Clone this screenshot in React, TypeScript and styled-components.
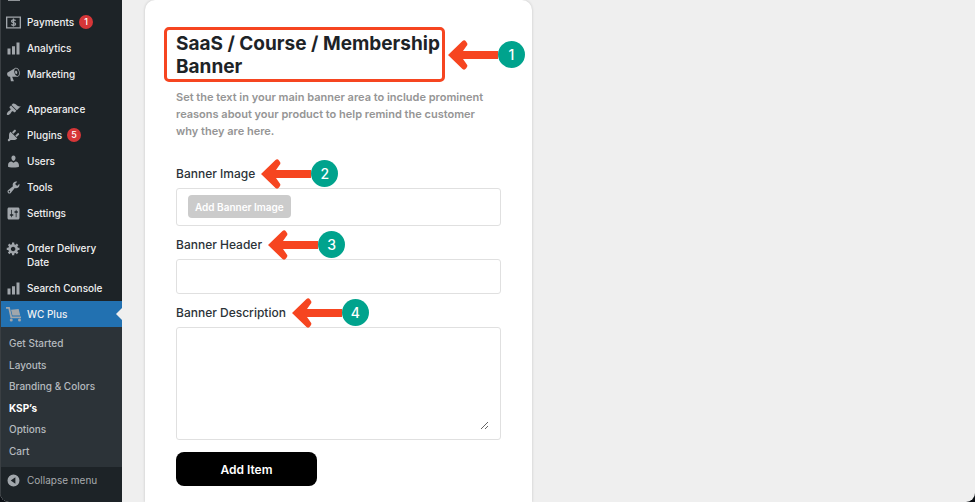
import React, { ReactNode } from "react";
import styled, { createGlobalStyle, css } from "styled-components";

const GlobalStyle = createGlobalStyle`
  *, *::before, *::after { box-sizing: border-box; }
  body {
    margin: 0;
    background: #0b0f14;
    font-family: Inter, "Liberation Sans", sans-serif;
    font-size: 11px;
    color: #1d2327;
  }
  button, input, textarea { font: inherit; }
  h1, p, ul { margin: 0; padding: 0; }
`;

const Shell = styled.div`
  display: flex;
  height: 100vh;
  overflow: hidden;
  border-radius: 0 0 9px 9px;
  background: #efefef;
`;

const Sidebar = styled.nav`
  flex: 0 0 122px;
  display: flex;
  flex-direction: column;
  background: #1d2327;
  border-left: 1px solid #3a3f43;
  font-size: 10px;
`;

const MenuList = styled.ul`
  list-style: none;
`;

const ScrolledItem = styled.div`
  height: 9px;
  padding-left: 7px;
  svg { display: block; }
`;

const Separator = styled.li`
  height: 9px;
`;

const MenuLink = styled.a<{ $current?: boolean }>`
  position: relative;
  display: grid;
  grid-template-columns: 15px 1fr;
  column-gap: 6px;
  padding: 6px 8px 6px 5px;
  line-height: 14px;
  font-weight: 500;
  color: #f0f0f1;
  text-decoration: none;
  ${(p) =>
    p.$current &&
    css`
      background: #2271b1;
      &::after {
        content: "";
        position: absolute;
        right: 0;
        top: 7px;
        border: 6px solid transparent;
        border-left-width: 0;
        border-right-color: #efefef;
      }
    `}
`;

const Glyph = styled.svg`
  width: 15px;
  height: 15px;
  margin-bottom: -1px;
  fill: #a1a6ab;
`;

const Count = styled.span`
  display: inline-block;
  min-width: 14px;
  height: 14px;
  margin-left: 5px;
  border-radius: 7px;
  background: #d63638;
  color: #fff;
  font-size: 9px;
  text-align: center;
  vertical-align: top;
`;

const SubMenu = styled.ul`
  display: grid;
  grid-auto-rows: 1fr;
  height: 140px;
  padding: 6px 0 5px;
  list-style: none;
  background: #2c3338;
`;

const SubLink = styled.a<{ $current?: boolean }>`
  display: block;
  padding-left: 8px;
  line-height: 21px;
  font-weight: ${(p) => (p.$current ? 700 : 500)};
  color: ${(p) => (p.$current ? "#fff" : "#b5babf")};
  text-decoration: none;
`;

const CollapseButton = styled.button`
  display: grid;
  grid-template-columns: 15px 1fr;
  column-gap: 6px;
  padding: 6px 8px 6px 5px;
  border: 0;
  background: none;
  line-height: 14px;
  text-align: left;
  color: #a7aaad;
`;

const Main = styled.main`
  flex: 1;
  padding-left: 23px;
`;

const Card = styled.form`
  display: flex;
  flex-direction: column;
  align-items: stretch;
  max-width: 387px;
  min-height: 100%;
  padding: 27px 31px 16px;
  background: #fff;
  border-radius: 10px 10px 0 0;
  box-shadow: 0 0 3px rgba(0, 0, 0, 0.18);
`;

const TitleBox = styled.div`
  position: relative;
  width: 281px;
  margin-left: -12px;
  padding: 2px 0 1px 9px;
  border: 3px solid #f64520;
  border-radius: 5px;
`;

const Title = styled.h1`
  font-size: 19px;
  line-height: 23px;
  font-weight: 700;
  white-space: nowrap;
`;

const Intro = styled.p`
  margin: 7px 0 15px;
  padding-right: 14px;
  line-height: 17px;
  font-weight: 600;
  color: #959595;
`;

const Label = styled.label`
  position: relative;
  align-self: flex-start;
  margin: 10px 0 6px;
  line-height: 17px;
  font-size: 12px;
  font-weight: 500;
  color: #2c3338;
`;

const fieldFrame = css`
  width: 100%;
  border: 1px solid #e0e0e0;
  border-radius: 3px;
  background: #fff;
`;

const UploadField = styled.div`
  ${fieldFrame}
  padding: 6px 11px 7px;
`;

const UploadButton = styled.button`
  display: block;
  height: 23px;
  padding: 0 7px;
  border: 0;
  border-radius: 4px;
  background: #cbcbcb;
  color: #fff;
  font-size: 10px;
  font-weight: 600;
  white-space: nowrap;
`;

const TextInput = styled.input`
  ${fieldFrame}
  height: 35px;
  padding: 0 11px;
`;

const TextAreaFrame = styled.div`
  ${fieldFrame}
  padding: 9px 11px;
`;

const TextArea = styled.textarea`
  display: block;
  width: 100%;
  height: 93px;
  padding: 0;
  border: 0;
  outline: 0;
  resize: vertical;
  background: transparent;
`;

const SubmitButton = styled.button`
  width: 141px;
  height: 34px;
  margin-top: 12px;
  border: 0;
  border-radius: 8px;
  background: #000;
  color: #fff;
  font-size: 12px;
  font-weight: 600;
`;

const Pointer = styled.span`
  position: absolute;
  z-index: 1;
  left: calc(100% + 6px);
  top: 50%;
  display: flex;
  align-items: center;
  transform: translateY(-50%);
`;

const PointerNumber = styled.span`
  width: 27px;
  height: 27px;
  border-radius: 50%;
  background: #00a38d;
  color: #fff;
  font-size: 14px;
  font-weight: 500;
  line-height: 27px;
  text-align: center;
`;

function Callout({ n }: { n: number }) {
  return (
    <Pointer>
      <svg width="50" height="30" viewBox="0 0 50 30" fill="#f64520" aria-hidden="true">
        <path d="M0 15 14.5 1Q16.5-.5 18 1.5L19 3Q20 4.500 18.500 6L15 11H50V19H15L18.500 24Q20 25.500 19 27L18 28.500Q16.500 30.500 14.500 29Z" />
      </svg>
      <PointerNumber>{n}</PointerNumber>
    </Pointer>
  );
}

const icons: Record<string, ReactNode> = {
  payments: (
    <>
      <path fillRule="evenodd" d="M0 2h20v16H0zM1.800 3.800v12.400h16.400V3.800z" />
      <path
        d="M12.800 7.600c-.5-.8-1.500-1.200-2.700-1.200-1.600 0-2.700.7-2.700 1.800 0 2.500 5.400 1.200 5.400 3.700 0 1.100-1.100 1.800-2.700 1.800-1.300 0-2.300-.4-2.900-1.300M10 4.800v10.400"
        fill="none"
        stroke="#a1a6ab"
        strokeWidth="1.700"
      />
    </>
  ),
  chart: <path d="M18 18V2h-4v16h4zm-6 0V7H8v11h4zm-6 0v-8H2v8h4z" />,
  megaphone: (
    <path d="M18.15 5.94c.46 1.62.38 3.22-.02 4.48-.42 1.28-1.26 2.18-2.3 2.48-.16.06-.26.06-.4.06-.06.02-.12.02-.18.02-.06.02-.14.02-.22.02h-6.8l2.220 5.5c.02.14-.06.26-.14.34-.08.1-.24.16-.34.16H6.950c-.1 0-.26-.06-.34-.16-.08-.08-.16-.2-.14-.34l-1-5.5H4.250l-.02-.02c-.5.06-1.080-.18-1.540-.62s-.88-1.080-1.060-1.880c-.24-.8-.2-1.560-.02-2.200.18-.62.58-1.080 1.060-1.300l.02-.02 9-5.400c.1-.06.18-.1.24-.16.06-.04.14-.08.24-.12.16-.08.28-.12.5-.18 1.040-.3 2.240.1 3.220.98s1.840 2.240 2.260 3.860zm-2.580 5.980h-.02c.4-.1.74-.34 1.040-.7.58-.7.86-1.760.86-3.040 0-.64-.1-1.300-.28-1.980-.34-1.360-1.020-2.500-1.780-3.240s-1.680-1.100-2.460-.88c-.82.22-1.400.96-1.700 2-.32 1.040-.28 2.360.06 3.720.38 1.360 1 2.500 1.800 3.240.78.74 1.620 1.100 2.480.88zm-2.540-7.080c.22-.04.42-.02.62.04.38.16.76.48 1.020 1s.42 1.200.42 1.780c0 .3-.04.56-.12.8-.18.48-.44.84-.86.94-.34.1-.8-.06-1.140-.4s-.64-.86-.78-1.500c-.18-.62-.12-1.240.02-1.720s.48-.84.82-.94z" />
  ),
  brush: (
    <path d="M14.48 11.06L7.410 3.990l1.500-1.500c.5-.56 2.300-.47 3.510.32 1.210.8 1.430 1.280 2.910 2.100 1.180.64 2.450 1.260 4.450.85zm-.71.71L6.700 4.700 4.930 6.470c-.39.39-.39 1.020 0 1.410l1.060 1.060c.39.39.39 1.030 0 1.420-.6.6-1.430 1.110-2.210 1.690-.35.26-.7.53-1.010.84C1.430 14.230.4 16.080 1.400 17.070c.99 1 2.840-.03 4.180-1.360.31-.31.58-.66.85-1.020.57-.78 1.080-1.610 1.690-2.210.39-.39 1.020-.39 1.410 0l1.060 1.060c.39.39 1.020.39 1.410 0z" />
  ),
  plug: (
    <path d="M13.11 4.36L9.870 7.600 8 5.730l3.240-3.240c.35-.34 1.050-.2 1.560.32.52.51.66 1.210.31 1.550zm-8 1.770l.91-1.120 9.010 9.010-1.190.84c-.71.71-2.630 1.160-3.820 1.160H6.140L4.900 17.260c-.59.59-1.540.59-2.120 0-.59-.58-.59-1.530 0-2.120l1.240-1.240v-3.880c0-1.130.4-3.190 1.090-3.890zm7.260 3.970l3.240-3.240c.34-.35 1.040-.21 1.550.31.52.51.66 1.210.31 1.550l-3.240 3.250z" />
  ),
  user: (
    <path d="M10 9.250c-2.270 0-2.730-3.440-2.730-3.440C7 4.020 7.820 2 9.970 2c2.160 0 2.980 2.020 2.710 3.810 0 0-.41 3.440-2.680 3.440zm0 2.570L12.720 10c2.390 0 4.520 2.330 4.520 4.530v2.490s-3.650 1.130-7.240 1.130c-3.650 0-7.240-1.130-7.240-1.130v-2.490c0-2.250 1.940-4.480 4.470-4.480z" />
  ),
  wrench: (
    <path d="M16.680 9.770c-1.340 1.340-3.300 1.670-4.950.99l-5.410 6.520c-.99.99-2.590.99-3.580 0s-.99-2.590 0-3.570l6.520-5.420c-.68-1.650-.35-3.610.99-4.950 1.280-1.280 3.120-1.620 4.720-1.060l-2.890 2.890 2.820 2.820 2.860-2.870c.53 1.580.18 3.390-1.080 4.650zM3.810 16.210c.4.39 1.040.39 1.430 0 .4-.4.4-1.040 0-1.430-.39-.4-1.030-.4-1.430 0-.39.39-.39 1.030 0 1.430z" />
  ),
  sliders: (
    <path d="M18 16V4c0-1.100-.9-2-2-2H4c-1.100 0-2 .9-2 2v12c0 1.100.9 2 2 2h12c1.100 0 2-.9 2-2zM8 11h1c.55 0 1 .45 1 1s-.45 1-1 1H8v1.500c0 .28-.22.5-.5.5s-.5-.22-.5-.5V13H6c-.55 0-1-.45-1-1s.45-1 1-1h1V5.500c0-.28.22-.5.5-.5s.5.22.5.5V11zm5-2h-1c-.55 0-1-.45-1-1s.45-1 1-1h1V5.500c0-.28.22-.5.5-.5s.5.22.5.5V7h1c.55 0 1 .45 1 1s-.45 1-1 1h-1v5.500c0 .28-.22.5-.5.5s-.5-.22-.5-.5V9z" />
  ),
  gear: (
    <path d="M18 12h-2.180c-.17.7-.44 1.350-.81 1.930l1.540 1.540-2.100 2.100-1.540-1.540c-.58.36-1.230.63-1.910.79V19H8v-2.180c-.68-.16-1.330-.43-1.910-.79l-1.540 1.540-2.120-2.120 1.540-1.540c-.36-.58-.63-1.230-.79-1.910H1V9.030h2.170c.16-.7.44-1.350.8-1.940L2.430 5.550l2.100-2.100 1.540 1.540c.58-.37 1.240-.64 1.930-.81V2h3v2.180c.68.16 1.330.43 1.910.79l1.540-1.540 2.120 2.120-1.540 1.540c.36.59.64 1.240.8 1.940H18V12zm-8.500 1.500c1.660 0 3-1.340 3-3s-1.340-3-3-3-3 1.340-3 3 1.340 3 3 3z" />
  ),
  cart: (
    <>
      <path d="M0 0h5l3 12.500H20V15H6L3.200 2.400H0z" />
      <path d="M6.800 3.800 16.800 2.500l2.200 8.800H8.600z" />
      <circle cx="7" cy="17.400" r="2" />
      <circle cx="18" cy="17.400" r="2" />
    </>
  ),
  collapse: (
    <path fillRule="evenodd" d="M10 2a8 8 0 1 1 0 16 8 8 0 0 1 0-16zm2.500 3.800L6.300 10l6.200 4.200z" />
  ),
};

function Icon({ name }: { name: string }) {
  return (
    <Glyph viewBox="0 0 20 20" aria-hidden="true">
      {icons[name]}
    </Glyph>
  );
}

type Item = { icon: string; text: string; count?: number; current?: boolean };

const groups: Item[][] = [
  [
    { icon: "payments", text: "Payments", count: 1 },
    { icon: "chart", text: "Analytics" },
    { icon: "megaphone", text: "Marketing" },
  ],
  [
    { icon: "brush", text: "Appearance" },
    { icon: "plug", text: "Plugins", count: 5 },
    { icon: "user", text: "Users" },
    { icon: "wrench", text: "Tools" },
    { icon: "sliders", text: "Settings" },
  ],
  [
    { icon: "gear", text: "Order Delivery Date" },
    { icon: "chart", text: "Search Console" },
    { icon: "cart", text: "WC Plus", current: true },
  ],
];

const subItems = ["Get Started", "Layouts", "Branding & Colors", "KSP’s", "Options", "Cart"];

export default function App() {
  return (
    <>
      <GlobalStyle />
      <Shell>
        <Sidebar aria-label="Main menu">
          <ScrolledItem>
            <svg width="12" height="1" aria-hidden="true">
              <rect width="12" height="1" fill="#8f9498" />
            </svg>
          </ScrolledItem>
          <MenuList>
            {groups.map((group, i) => (
              <React.Fragment key={i}>
                {i > 0 && <Separator role="separator" />}
                {group.map((item) => (
                  <li key={item.text}>
                    <MenuLink href="#" $current={item.current}>
                      <Icon name={item.icon} />
                      <span>
                        {item.text}
                        {item.count && <Count>{item.count}</Count>}
                      </span>
                    </MenuLink>
                  </li>
                ))}
              </React.Fragment>
            ))}
          </MenuList>
          <SubMenu>
            {subItems.map((text) => (
              <li key={text}>
                <SubLink href="#" $current={text === "KSP’s"}>
                  {text}
                </SubLink>
              </li>
            ))}
          </SubMenu>
          <CollapseButton type="button">
            <Icon name="collapse" />
            Collapse menu
          </CollapseButton>
        </Sidebar>
        <Main>
          <Card onSubmit={(e) => e.preventDefault()}>
            <TitleBox>
              <Title>
                SaaS / Course / Membership
                <br />
                Banner
              </Title>
              <Callout n={1} />
            </TitleBox>
            <Intro>
              Set the text in your main banner area to include prominent reasons about your product
              to help remind the customer why they are here.
            </Intro>
            <Label as="div" id="image-label">
              Banner Image
              <Callout n={2} />
            </Label>
            <UploadField role="group" aria-labelledby="image-label">
              <UploadButton type="button">Add Banner Image</UploadButton>
            </UploadField>
            <Label htmlFor="banner-header">
              Banner Header
              <Callout n={3} />
            </Label>
            <TextInput id="banner-header" type="text" />
            <Label htmlFor="banner-description">
              Banner Description
              <Callout n={4} />
            </Label>
            <TextAreaFrame>
              <TextArea id="banner-description" />
            </TextAreaFrame>
            <SubmitButton type="submit">Add Item</SubmitButton>
          </Card>
        </Main>
      </Shell>
    </>
  );
}
